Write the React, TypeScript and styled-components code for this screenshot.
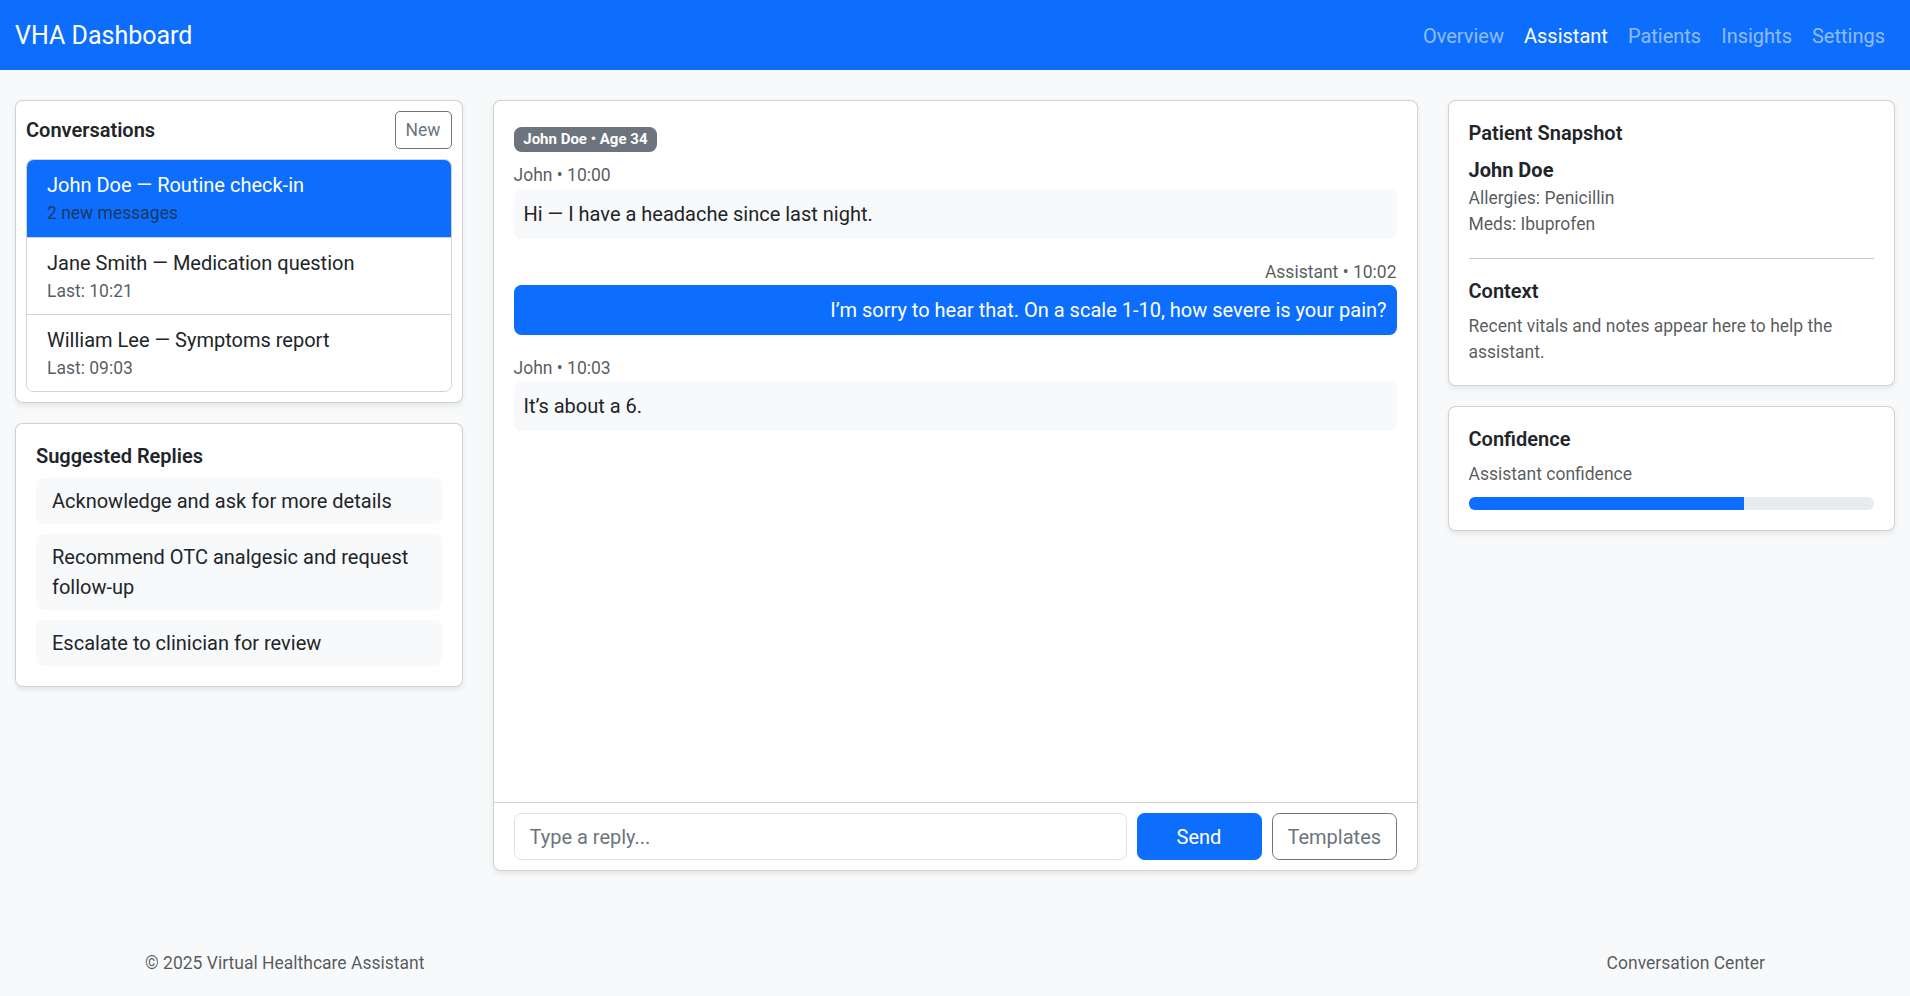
import React from 'react';
import styled, { createGlobalStyle } from 'styled-components';

const GlobalStyle = createGlobalStyle`
	* {
		box-sizing: border-box;
	}

	body {
		margin: 0;
		background: #f8f9fa;
		color: #212529;
		font-family: Roboto, 'Noto Sans', 'Liberation Sans', sans-serif;
		font-size: 20px;
		line-height: 1.5;
	}
`;

const conversations = [
	{ title: 'John Doe — Routine check-in', sub: '2 new messages', active: true },
	{ title: 'Jane Smith — Medication question', sub: 'Last: 10:21', active: false },
	{ title: 'William Lee — Symptoms report', sub: 'Last: 09:03', active: false },
];

const suggestions = [
	'Acknowledge and ask for more details',
	'Recommend OTC analgesic and request follow-up',
	'Escalate to clinician for review',
];

const messages = [
	{ who: 'John', time: '10:00', text: 'Hi — I have a headache since last night.', mine: false },
	{
		who: 'Assistant',
		time: '10:02',
		text: 'I’m sorry to hear that. On a scale 1-10, how severe is your pain?',
		mine: true,
	},
	{ who: 'John', time: '10:03', text: 'It’s about a 6.', mine: false },
];

const navItems = ['Overview', 'Assistant', 'Patients', 'Insights', 'Settings'];

const App = () => {
	const confidence = 68;

	return (
		<Page>
			<GlobalStyle />
			<Navbar>
				<Brand>VHA Dashboard</Brand>
				<NavList>
					{navItems.map((item) => (
						<NavLink key={item} $active={item === 'Assistant'}>
							{item}
						</NavLink>
					))}
				</NavList>
			</Navbar>

			<Main>
				<Column>
					<Card $pad={10}>
						<CardHeaderRow>
							<CardTitle>Conversations</CardTitle>
							<SmallButton>New</SmallButton>
						</CardHeaderRow>
						<ListGroup>
							{conversations.map((c) => (
								<ListItem key={c.title} $active={c.active}>
									<div>{c.title}</div>
									<Muted>{c.sub}</Muted>
								</ListItem>
							))}
						</ListGroup>
					</Card>

					<Card $pad={20}>
						<CardTitle>Suggested Replies</CardTitle>
						<SuggestionList>
							{suggestions.map((s) => (
								<Suggestion key={s}>{s}</Suggestion>
							))}
						</SuggestionList>
					</Card>
				</Column>

				<Column>
					<ChatCard>
						<ChatBody>
							<BadgeLine>
								<Badge>John Doe • Age 34</Badge>
							</BadgeLine>
							{messages.map((m) => (
								<MessageBlock key={m.time} $mine={m.mine}>
									<Meta>
										{m.who} • {m.time}
									</Meta>
									<Bubble $mine={m.mine}>{m.text}</Bubble>
								</MessageBlock>
							))}
						</ChatBody>
						<ChatFooter>
							<ReplyInput placeholder="Type a reply..." />
							<Button $variant="primary">Send</Button>
							<Button $variant="outline">Templates</Button>
						</ChatFooter>
					</ChatCard>
				</Column>

				<Column>
					<Card $pad={20}>
						<CardTitle>Patient Snapshot</CardTitle>
						<PatientName>John Doe</PatientName>
						<Muted>Allergies: Penicillin</Muted>
						<Muted>Meds: Ibuprofen</Muted>
						<Divider />
						<CardTitle>Context</CardTitle>
						<Muted>Recent vitals and notes appear here to help the assistant.</Muted>
					</Card>

					<Card $pad={20}>
						<CardTitle>Confidence</CardTitle>
						<Muted>Assistant confidence</Muted>
						<Progress>
							<ProgressFill style={{ width: `${confidence}%` }} />
						</Progress>
					</Card>
				</Column>
			</Main>

			<Footer>
				<span>© 2025 Virtual Healthcare Assistant</span>
				<span>Conversation Center</span>
			</Footer>
		</Page>
	);
};

export default App;

const Page = styled.div`
	min-height: 100vh;
	display: flex;
	flex-direction: column;
`;

const Navbar = styled.nav`
	height: 70px;
	background: #0d6efd;
	padding: 0 15px;
	display: flex;
	align-items: center;
	justify-content: space-between;
`;

const Brand = styled.div`
	color: #fff;
	font-size: 25px;
	line-height: 1.5;
	padding-top: 2px;
`;

const NavList = styled.div`
	display: flex;
	align-items: center;
	padding-top: 2px;
`;

const NavLink = styled.a<{ $active?: boolean }>`
	padding: 10px;
	font-size: 20px;
	color: ${(p) => (p.$active ? '#fff' : 'rgba(255, 255, 255, 0.55)')};
	cursor: pointer;
`;

const Main = styled.main`
	flex: 1;
	padding: 30px 15px;
	display: grid;
	grid-template-columns: repeat(12, 1fr);
	column-gap: 30px;
	align-items: start;

	& > :nth-child(1),
	& > :nth-child(3) {
		grid-column: span 3;
	}

	& > :nth-child(2) {
		grid-column: span 6;
	}
`;

const Column = styled.div`
	display: flex;
	flex-direction: column;
	gap: 20px;
	min-width: 0;
`;

const Card = styled.div<{ $pad: number }>`
	background: #fff;
	border: 1px solid rgba(0, 0, 0, 0.175);
	border-radius: 7.5px;
	box-shadow: 0 2.5px 5px rgba(0, 0, 0, 0.075);
	padding: ${(p) => p.$pad}px;
`;

const CardHeaderRow = styled.div`
	display: flex;
	align-items: center;
	justify-content: space-between;
	margin-bottom: 10px;
`;

const CardTitle = styled.div`
	font-size: 20px;
	font-weight: 600;
	line-height: 1.2;
	margin-bottom: 10px;

	${CardHeaderRow} & {
		margin-bottom: 0;
	}
`;

const SmallButton = styled.button`
	font-family: inherit;
	font-size: 17.5px;
	line-height: 1.5;
	padding: 5px 10px;
	border: 1px solid #6c757d;
	border-radius: 5px;
	background: transparent;
	color: #6c757d;
`;

const ListGroup = styled.div`
	border: 1px solid rgba(0, 0, 0, 0.175);
	border-radius: 7.5px;
	overflow: hidden;
`;

const ListItem = styled.div<{ $active?: boolean }>`
	padding: 10px 20px;
	background: ${(p) => (p.$active ? '#0d6efd' : '#fff')};
	color: ${(p) => (p.$active ? '#fff' : '#212529')};

	& + & {
		border-top: 1px solid rgba(0, 0, 0, 0.175);
	}
`;

const Muted = styled.div`
	font-size: 17.5px;
	line-height: 1.5;
	color: rgba(33, 37, 41, 0.75);
`;

const SuggestionList = styled.div`
	display: flex;
	flex-direction: column;
	gap: 10px;
`;

const Suggestion = styled.div`
	background: #f8f9fa;
	border-radius: 7.5px;
	padding: 8px 16px;
`;

const ChatCard = styled(Card).attrs({ $pad: 0 })`
	height: 771px;
	display: flex;
	flex-direction: column;
	overflow: hidden;
`;

const ChatBody = styled.div`
	flex: 1;
	padding: 21px 20px 20px;
`;

const BadgeLine = styled.div`
	margin-bottom: 10px;
`;

const Badge = styled.span`
	display: inline-block;
	background: #6c757d;
	color: #fff;
	font-size: 15px;
	font-weight: 700;
	line-height: 1;
	padding: 5.25px 9.75px;
	border-radius: 7.5px;
`;

const MessageBlock = styled.div<{ $mine?: boolean }>`
	margin-bottom: 20px;
	text-align: ${(p) => (p.$mine ? 'right' : 'left')};
`;

const Meta = styled.div`
	font-size: 17.5px;
	line-height: 1.5;
	color: rgba(33, 37, 41, 0.75);
`;

const Bubble = styled.div<{ $mine?: boolean }>`
	padding: 10px;
	border-radius: 7.5px;
	background: ${(p) => (p.$mine ? '#0d6efd' : '#f8f9fa')};
	color: ${(p) => (p.$mine ? '#fff' : '#212529')};
`;

const ChatFooter = styled.div`
	border-top: 1px solid rgba(0, 0, 0, 0.175);
	padding: 10px 20px;
	display: flex;
	gap: 10px;
`;

const ReplyInput = styled.input`
	flex: 1;
	min-width: 0;
	font-family: inherit;
	font-size: 20px;
	line-height: 1.5;
	padding: 7.5px 15px;
	border: 1px solid #dee2e6;
	border-radius: 7.5px;
	color: #212529;

	&::placeholder {
		color: #6c757d;
	}
`;

const Button = styled.button<{ $variant: 'primary' | 'outline' }>`
	width: 125px;
	font-family: inherit;
	font-size: 20px;
	line-height: 1.5;
	padding: 7.5px 15px;
	border-radius: 7.5px;
	border: 1px solid ${(p) => (p.$variant === 'primary' ? '#0d6efd' : '#6c757d')};
	background: ${(p) => (p.$variant === 'primary' ? '#0d6efd' : 'transparent')};
	color: ${(p) => (p.$variant === 'primary' ? '#fff' : '#6c757d')};
`;

const PatientName = styled.div`
	font-weight: 700;
`;

const Divider = styled.hr`
	margin: 20px 0;
	border: 0;
	border-top: 1px solid rgba(33, 37, 41, 0.25);
`;

const Progress = styled.div`
	margin-top: 10px;
	height: 12.5px;
	background: #e9ecef;
	border-radius: 6px;
	overflow: hidden;
`;

const ProgressFill = styled.div`
	height: 100%;
	background: #0d6efd;
`;

const Footer = styled.footer`
	width: 100%;
	max-width: 1650px;
	margin: 0 auto;
	padding: 20px 15px;
	display: flex;
	justify-content: space-between;
	font-size: 17.5px;
	line-height: 1.5;
	color: rgba(33, 37, 41, 0.75);
`;
